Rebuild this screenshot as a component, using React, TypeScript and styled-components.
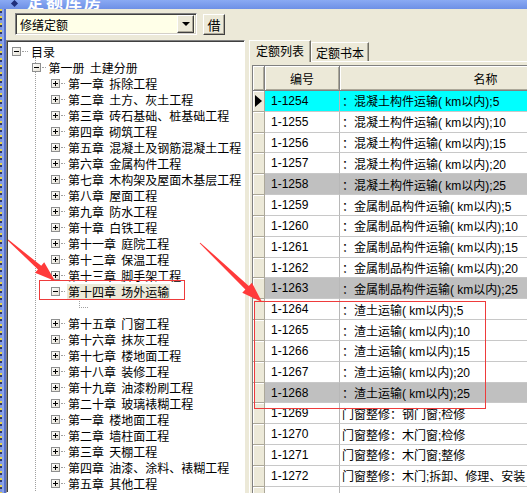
import React from "react";
import styled, { createGlobalStyle, css } from "styled-components";

const GlobalStyle = createGlobalStyle`
  html, body { margin: 0; padding: 0; background: #ECE9D8; overflow: hidden; }
  body { font-family: "Liberation Sans", "Noto Sans CJK SC", sans-serif; font-size: 12px; color: #000; }
`;

const CJK = `"Noto Sans CJK SC", "Liberation Sans", sans-serif`;

const Window = styled.div`
  position: relative;
  width: 527px;
  height: 493px;
  overflow: hidden;
  display: flex;
  flex-direction: column;
  background: #ECE9D8;
`;

const TitleBar = styled.div`
  flex: none;
  height: 9px;
  overflow: hidden;
  display: flex;
  align-items: flex-end;
  gap: 10px;
  padding-left: 12px;
  background: linear-gradient(to bottom, #8AAAF3, #6E90E6);
`;

const TitleIcon = styled.span`
  width: 5px;
  height: 5px;
  margin-bottom: 3px;
  background: #1E2E7A;
  transform: rotate(45deg);
`;

const TitleText = styled.span`
  font-family: ${CJK};
  font-weight: bold;
  font-size: 17px;
  line-height: 17px;
  color: #fff;
  letter-spacing: 2px;
`;

const Main = styled.div`
  flex: 1;
  display: flex;
  min-height: 0;
`;

const Frame = styled.div`
  flex: none;
  width: 6px;
  background:
    linear-gradient(to right, transparent 2px, #8DA4EA 2px, #8DA4EA 4px, #5670C8 4px),
    repeating-linear-gradient(to bottom, #E6D24A 0 2px, #2C3870 2px 4px, #7E96E2 4px 7px);
`;

const Client = styled.div`
  flex: 1;
  min-width: 0;
  display: grid;
  grid-template-columns: 239px 1fr;
  grid-template-rows: 31px 1fr;
  grid-template-areas: "tool ." "tree right";
`;

const Toolbar = styled.div`
  grid-area: tool;
  display: flex;
  align-items: flex-start;
  gap: 6px;
  padding: 4px 0 0 9px;
`;

const Combo = styled.div`
  box-sizing: border-box;
  width: 182px;
  height: 22px;
  display: flex;
  align-items: center;
  background: #FFFFE8;
  border: 1px solid;
  border-color: #808080 #fff #fff #808080;
  box-shadow: inset 1px 1px #404040, inset -1px -1px #D4D0C8;
  padding: 2px;
`;

const ComboText = styled.span`
  flex: 1;
  font-family: ${CJK};
  font-size: 12px;
  padding-left: 2px;
`;

const raised = css`
  background: #ECE9D8;
  border: 1px solid;
  border-color: #fff #404040 #404040 #fff;
  box-shadow: inset -1px -1px #ACA899;
  box-sizing: border-box;
`;

const DropButton = styled.span`
  ${raised};
  width: 17px;
  height: 18px;
  display: flex;
  align-items: center;
  justify-content: center;
`;

const DropArrow = styled.span`
  width: 0;
  height: 0;
  border-left: 4px solid transparent;
  border-right: 4px solid transparent;
  border-top: 4px solid #000;
`;

const PushButton = styled.button`
  ${raised};
  width: 22px;
  height: 21px;
  margin-top: 1px;
  padding: 0;
  font-family: ${CJK};
  font-size: 13px;
  line-height: 17px;
  color: #000;
`;

const TreePanel = styled.div`
  grid-area: tree;
  background: #fff;
  border: 1px solid;
  border-color: #808080 #fff #fff #808080;
  box-shadow: inset 1px 1px #404040;
  padding-top: 2px;
  overflow: hidden;
`;

const TreeGroup = styled.div`
  position: relative;
  &::before {
    content: "";
    position: absolute;
    left: 28px;
    top: -2px;
    bottom: -40px;
    border-left: 1px dotted #A0A0A0;
  }
`;

const TreeRow = styled.div<{ $level: number }>`
  position: relative;
  height: 16px;
  display: flex;
  align-items: center;
  padding-left: ${(p) => 5 + p.$level * 19.5}px;
`;

const ToggleBox = styled.svg`
  position: relative;
  z-index: 1;
  flex: none;
  width: 9px;
  height: 9px;
`;

const Dots = styled.span<{ $wide?: boolean }>`
  flex: none;
  width: ${(p) => (p.$wide ? 6 : 4)}px;
  margin: 0 2px 0 1px;
  border-top: 1px dotted #A0A0A0;
`;

const TreeLabel = styled.span<{ $selected?: boolean }>`
  font-family: ${CJK};
  font-size: 12px;
  line-height: 15px;
  padding: 0 1px;
  word-spacing: 2.5px;
  white-space: nowrap;
  background: ${(p) => (p.$selected ? "#ECE9D8" : "transparent")};
`;

const Connector = styled.span`
  width: 8px;
  height: 8px;
  margin: -8px 0 0 67px;
  border-left: 1px dotted #A0A0A0;
  border-bottom: 1px dotted #A0A0A0;
`;

const RightPane = styled.div`
  grid-area: right;
  min-width: 0;
  overflow: hidden;
  display: flex;
  flex-direction: column;
  padding-left: 4px;
`;

const TabStrip = styled.div`
  flex: none;
  height: 21px;
  display: flex;
  align-items: flex-end;
  position: relative;
  z-index: 1;
`;

const Tab = styled.div<{ $active?: boolean }>`
  box-sizing: border-box;
  display: flex;
  align-items: center;
  justify-content: center;
  font-family: ${CJK};
  font-size: 12px;
  background: #ECE9D8;
  border-top: 1px solid #fff;
  border-left: 1px solid #fff;
  border-right: 1px solid #716F64;
  box-shadow: inset -1px 0 #ACA899;
  ${(p) =>
    p.$active
      ? css`
          width: 62px;
          height: 22px;
          margin-bottom: -1px;
          padding-bottom: 2px;
        `
      : css`
          width: 58px;
          height: 19px;
          padding-top: 1px;
        `}
`;

const TabPanel = styled.div`
  flex: 1;
  border-top: 1px solid #fff;
  border-left: 1px solid #fff;
  padding: 3px 0 0 2px;
  overflow: hidden;
`;

const DataGrid = styled.div`
  width: 390px;
  border-top: 1px solid #808080;
  border-left: 1px solid #808080;
`;

const GridRow = styled.div<{ $head?: boolean }>`
  display: grid;
  grid-template-columns: 12px 75px 292px;
  height: ${(p) => (p.$head ? "25px" : "20.83px")};
`;

type Tone = "current" | "gray" | "plain";
const toneBg: Record<Tone, string> = { current: "#00FFFF", gray: "#C0C0C0", plain: "#FFFFFF" };

const HeadCell = styled.div`
  box-sizing: border-box;
  background: #ECE9D8;
  border-right: 1px solid #808080;
  border-bottom: 1px solid #808080;
  box-shadow: inset 1px 1px #fff, inset -1px -1px #ACA899;
  display: flex;
  align-items: center;
  justify-content: center;
  font-family: ${CJK};
  font-size: 12px;
`;

const Indicator = styled.div`
  box-sizing: border-box;
  background: #ECE9D8;
  border-bottom: 1px solid #ACA899;
  border-right: 1px solid #ACA899;
  box-shadow: inset 1px 1px #fff;
  display: flex;
  align-items: center;
  padding-left: 2px;
`;

const Pointer = styled.span`
  width: 0;
  height: 0;
  border-left: 7px solid #000;
  border-top: 6px solid transparent;
  border-bottom: 6px solid transparent;
`;

const DataCell = styled.div<{ $tone: Tone; $pad: number }>`
  box-sizing: border-box;
  background: ${(p) => toneBg[p.$tone]};
  border-right: 1px solid #B8B8B8;
  border-bottom: 1px solid #C8C8C8;
  display: flex;
  align-items: center;
  padding-left: ${(p) => p.$pad}px;
  font-family: "Liberation Sans", "Noto Sans CJK SC", sans-serif;
  font-size: 12px;
  white-space: nowrap;
  overflow: hidden;
`;

const Overlay = styled.svg`
  position: absolute;
  left: 0;
  top: 0;
  width: 527px;
  height: 493px;
  pointer-events: none;
  z-index: 5;
`;

type Node = { label?: string; level: number; toggle?: "plus" | "minus"; selected?: boolean; empty?: boolean };

const chapters: Node[] = [
  "第一章 拆除工程",
  "第二章 土方、灰土工程",
  "第三章 砖石基础、桩基础工程",
  "第四章 砌筑工程",
  "第五章 混凝土及钢筋混凝土工程",
  "第六章 金属构件工程",
  "第七章 木构架及屋面木基层工程",
  "第八章 屋面工程",
  "第九章 防水工程",
  "第十章 白铁工程",
  "第十一章 庭院工程",
  "第十二章 保温工程",
  "第十三章 脚手架工程",
].map((label) => ({ label, level: 2, toggle: "plus" as const }));

const laterChapters: Node[] = [
  "第十五章 门窗工程",
  "第十六章 抹灰工程",
  "第十七章 楼地面工程",
  "第十八章 装修工程",
  "第十九章 油漆粉刷工程",
  "第二十章 玻璃裱糊工程",
  "第一章 楼地面工程",
  "第二章 墙柱面工程",
  "第三章 天棚工程",
  "第四章 油漆、涂料、裱糊工程",
  "第五章 其他工程",
].map((label) => ({ label, level: 2, toggle: "plus" as const }));

const groupNodes: Node[] = [
  { label: "第一册 土建分册", level: 1, toggle: "minus" },
  ...chapters,
  { label: "第十四章 场外运输", level: 2, toggle: "minus", selected: true },
  { level: 3, empty: true },
  ...laterChapters,
];

type Rec = { code: string; name: string; tone: Tone };
const mk = (code: number, name: string, tone: Tone = "plain"): Rec => ({ code: `1-${code}`, name, tone });
const records: Rec[] = [
  mk(1254, "：混凝土构件运输( km以内);5", "current"),
  mk(1255, "：混凝土构件运输( km以内);10"),
  mk(1256, "：混凝土构件运输( km以内);15"),
  mk(1257, "：混凝土构件运输( km以内);20"),
  mk(1258, "：混凝土构件运输( km以内);25", "gray"),
  mk(1259, "：金属制品构件运输( km以内);5"),
  mk(1260, "：金属制品构件运输( km以内);10"),
  mk(1261, "：金属制品构件运输( km以内);15"),
  mk(1262, "：金属制品构件运输( km以内);20"),
  mk(1263, "：金属制品构件运输( km以内);25", "gray"),
  mk(1264, "：渣土运输( km以内);5"),
  mk(1265, "：渣土运输( km以内);10"),
  mk(1266, "：渣土运输( km以内);15"),
  mk(1267, "：渣土运输( km以内);20"),
  mk(1268, "：渣土运输( km以内);25", "gray"),
  mk(1269, "门窗整修：钢门窗;检修"),
  mk(1270, "门窗整修：木门窗;检修"),
  mk(1271, "门窗整修：木门窗;整修"),
  mk(1272, "门窗整修：木门;拆卸、修理、安装"),
  { code: "", name: "", tone: "plain" },
];

const Toggle: React.FC<{ kind: "plus" | "minus" }> = ({ kind }) => (
  <ToggleBox viewBox="0 0 9 9">
    <defs>
      <linearGradient id={`tg-${kind}`} x1="0" y1="0" x2="1" y2="1">
        <stop offset="0" stopColor="#FFFFFF" />
        <stop offset="1" stopColor="#E4E0D4" />
      </linearGradient>
    </defs>
    <rect x="0.5" y="0.5" width="8" height="8" fill={`url(#tg-${kind})`} stroke="#8E8F8F" />
    <line x1="2" y1="4.5" x2="7" y2="4.5" stroke="#000" />
    {kind === "plus" && <line x1="4.5" y1="2" x2="4.5" y2="7" stroke="#000" />}
  </ToggleBox>
);

const TreeItem: React.FC<{ node: Node }> = ({ node }) => {
  if (node.empty) {
    return (
      <TreeRow $level={0}>
        <Connector />
      </TreeRow>
    );
  }
  return (
    <TreeRow $level={node.level}>
      {node.toggle && <Toggle kind={node.toggle} />}
      <Dots $wide={node.level === 0} />
      <TreeLabel $selected={node.selected}>{node.label}</TreeLabel>
    </TreeRow>
  );
};

const Arrow: React.FC<{ points: string }> = ({ points }) => <polygon points={points} fill="#FF3A3A" />;

export default function App() {
  return (
    <>
      <GlobalStyle />
      <Window>
        <TitleBar>
          <TitleIcon />
          <TitleText>定额库房</TitleText>
        </TitleBar>
        <Main>
          <Frame />
          <Client>
            <Toolbar>
              <Combo>
                <ComboText>修缮定额</ComboText>
                <DropButton>
                  <DropArrow />
                </DropButton>
              </Combo>
              <PushButton>借</PushButton>
            </Toolbar>
            <TreePanel>
              <TreeItem node={{ label: "目录", level: 0, toggle: "minus" }} />
              <TreeGroup>
                {groupNodes.map((n, i) => (
                  <TreeItem key={i} node={n} />
                ))}
              </TreeGroup>
            </TreePanel>
            <RightPane>
              <TabStrip>
                <Tab $active>定额列表</Tab>
                <Tab>定额书本</Tab>
              </TabStrip>
              <TabPanel>
                <DataGrid>
                  <GridRow $head>
                    <HeadCell />
                    <HeadCell>编号</HeadCell>
                    <HeadCell>名称</HeadCell>
                  </GridRow>
                  {records.map((r, i) => (
                    <GridRow key={i}>
                      <Indicator>{r.tone === "current" && <Pointer />}</Indicator>
                      <DataCell $tone={r.tone} $pad={6}>{r.code}</DataCell>
                      <DataCell $tone={r.tone} $pad={2}>{r.name}</DataCell>
                    </GridRow>
                  ))}
                </DataGrid>
              </TabPanel>
            </RightPane>
          </Client>
        </Main>
        <Overlay viewBox="0 0 527 493">
          <rect x="39.5" y="280.5" width="145" height="19" fill="none" stroke="#EE3B3B" />
          <rect x="254.5" y="301.5" width="231" height="107" fill="none" stroke="#EE3B3B" />
          <Arrow points="8.33,239.62 41.24,265.72 44.2,262.33 55,281 35,272.87 37.96,269.48 7.67,240.38" />
          <Arrow points="200.34,242.64 248.82,285.99 251.92,282.73 262,302 242.28,292.87 245.38,289.61 199.66,243.36" />
        </Overlay>
      </Window>
    </>
  );
}
